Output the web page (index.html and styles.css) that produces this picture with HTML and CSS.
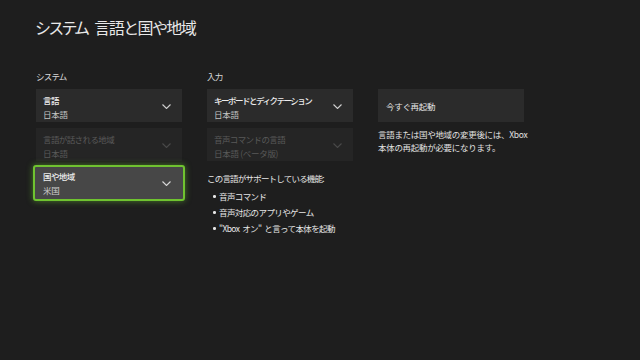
FILE: index.html
```html
<!DOCTYPE html>
<html lang="ja">
<head>
<meta charset="UTF-8">
<meta name="viewport" content="width=device-width, initial-scale=1.0">
<title>言語と国や地域</title>
<link rel="stylesheet" href="styles.css">
</head>
<body>
<div class="page">
    <h1><span class="crumb">システム</span><span class="page-name">言語と国や地域</span></h1>
    <div class="columns">
        <div class="column">
            <div class="section-label">システム</div>
            <div class="card">
                <div class="card-text">
                    <div class="card-title">言語</div>
                    <div class="card-value">日本語</div>
                </div>
                <svg class="chevron" width="9" height="5" viewBox="0 0 9 5"><polyline points="0.5,0.5 4.5,4.5 8.5,0.5" fill="none" stroke="#d0d0d0" stroke-width="1.1"/></svg>
            </div>
            <div class="card disabled">
                <div class="card-text">
                    <div class="card-title">言語が話される地域</div>
                    <div class="card-value">日本語</div>
                </div>
                <svg class="chevron" width="9" height="5" viewBox="0 0 9 5"><polyline points="0.5,0.5 4.5,4.5 8.5,0.5" fill="none" stroke="#4a4a4a" stroke-width="1.1"/></svg>
            </div>
            <div class="card focused">
                <div class="card-text">
                    <div class="card-title">国や地域</div>
                    <div class="card-value">米国</div>
                </div>
                <svg class="chevron" width="9" height="5" viewBox="0 0 9 5"><polyline points="0.5,0.5 4.5,4.5 8.5,0.5" fill="none" stroke="#d8d8d8" stroke-width="1.1"/></svg>
            </div>
        </div>

        <div class="column">
            <div class="section-label">入力</div>
            <div class="card">
                <div class="card-text">
                    <div class="card-title kana">キーボードとディクテーション</div>
                    <div class="card-value">日本語</div>
                </div>
                <svg class="chevron" width="9" height="5" viewBox="0 0 9 5"><polyline points="0.5,0.5 4.5,4.5 8.5,0.5" fill="none" stroke="#d0d0d0" stroke-width="1.1"/></svg>
            </div>
            <div class="card disabled">
                <div class="card-text">
                    <div class="card-title">音声コマンドの言語</div>
                    <div class="card-value">日本語 (ベータ版)</div>
                </div>
                <svg class="chevron" width="9" height="5" viewBox="0 0 9 5"><polyline points="0.5,0.5 4.5,4.5 8.5,0.5" fill="none" stroke="#4a4a4a" stroke-width="1.1"/></svg>
            </div>
            <div class="features-title">この言語がサポートしている機能:</div>
            <ul class="features">
                <li>音声コマンド</li>
                <li>音声対応のアプリやゲーム</li>
                <li>"Xbox オン" と言って本体を起動</li>
            </ul>
        </div>

        <div class="column">
            <div class="section-label">&nbsp;</div>
            <div class="card button-card">今すぐ再起動</div>
            <p class="note">言語または国や地域の変更後には、Xbox<br>本体の再起動が必要になります。</p>
        </div>
    </div>
</div>
</body>
</html>
```

FILE: styles.css
```css
body {
    margin: 0;
    padding: 0;
    background-color: #1e1e1e;
    color: #e6e6e6;
    font-family: "Noto Sans CJK JP", "Open Sans", sans-serif;
    width: 640px;
    height: 360px;
    overflow: hidden;
}
.page {
    padding: 16px 0 0 35px;
}
h1 {
    margin: 0;
    font-size: 16px;
    line-height: 22px;
    font-weight: 400;
    color: #e8e8e8;
    display: flex;
    gap: 7px;
}
.crumb {
    letter-spacing: -2.8px;
}
.page-name {
    letter-spacing: -1.6px;
}
.columns {
    display: flex;
    gap: 25px;
    margin-top: 32px;
    padding-left: 1px;
}
.column {
    width: 146px;
    display: flex;
    flex-direction: column;
}
.section-label {
    font-size: 8.5px;
    line-height: 12px;
    color: #d8d8d8;
    margin-bottom: 7px;
    letter-spacing: -0.8px;
}
.card {
    height: 33px;
    box-sizing: border-box;
    background-color: #2b2b2b;
    padding: 4px 11px 0 7px;
    display: flex;
    align-items: flex-start;
    justify-content: space-between;
    margin-bottom: 6px;
}
.card-text {
    display: flex;
    flex-direction: column;
}
.card-title {
    font-size: 8.5px;
    line-height: 14px;
    font-weight: 500;
    color: #ececec;
    white-space: nowrap;
    letter-spacing: -0.6px;
}
.card-title.kana {
    letter-spacing: -1.5px;
}
.card-value {
    font-size: 8.5px;
    line-height: 14px;
    color: #c4c4c4;
    white-space: nowrap;
    letter-spacing: -0.3px;
}
.chevron {
    margin-top: 11px;
}
.card.disabled {
    background-color: #252525;
}
.card.disabled .card-title,
.card.disabled .card-value {
    color: #595959;
    font-weight: 400;
}
.card.focused {
    height: 36px;
    margin: -2px -3px 6px;
    padding: 2px 12px 0 8px;
    background-color: #474747;
    border: 2px solid #6fc330;
    border-radius: 3px;
    box-shadow: 0 0 6px rgba(110, 200, 50, 0.55);
}
.card.focused .chevron {
    margin-top: 12px;
}
.card.focused .card-value {
    color: #cfcfcf;
}
.features-title {
    font-size: 8.5px;
    line-height: 12px;
    margin-top: 5px;
    color: #e6e6e6;
    letter-spacing: -0.8px;
}
.features {
    list-style: none;
    margin: 4px 0 0;
    padding: 0;
}
.features li {
    font-size: 8.5px;
    line-height: 16px;
    color: #e6e6e6;
    padding-left: 12px;
    position: relative;
    white-space: nowrap;
    letter-spacing: -0.6px;
    word-spacing: 1.5px;
}
.features li::before {
    content: "";
    position: absolute;
    left: 6px;
    top: 7px;
    width: 2.5px;
    height: 2.5px;
    border-radius: 50%;
    background-color: #e6e6e6;
}
.button-card {
    align-items: center;
    padding: 0 0 0 8px;
    font-size: 8.5px;
    color: #e6e6e6;
    letter-spacing: -0.3px;
}
.note {
    margin: 0;
    font-size: 8.5px;
    line-height: 12.5px;
    color: #e0e0e0;
    white-space: nowrap;
    letter-spacing: -0.3px;
}
```
